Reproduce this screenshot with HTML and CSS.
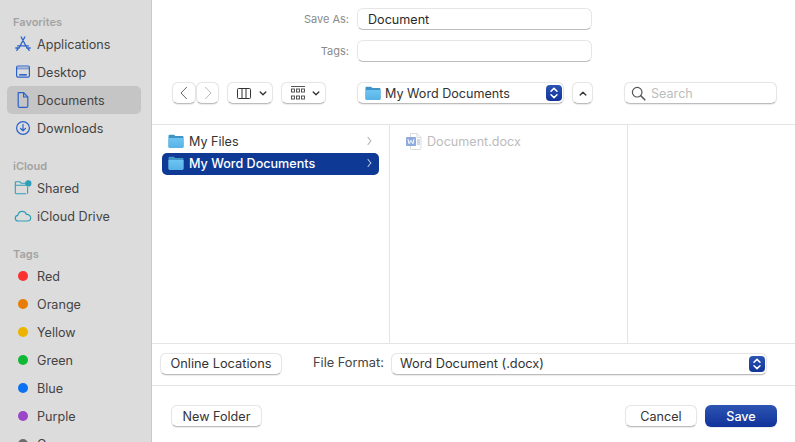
FILE: index.html
```html
<!DOCTYPE html>
<html lang="en">
<head>
    <meta charset="UTF-8">
    <title>Save As</title>
    <link rel="stylesheet" href="styles.css">
</head>
<body>
    <svg class="defs" width="0" height="0">
        <defs>
            <linearGradient id="folder-front" x1="0" y1="0" x2="0" y2="1">
                <stop offset="0" stop-color="#6cc4f0"/>
                <stop offset="1" stop-color="#58b2e6"/>
            </linearGradient>
            <symbol id="folder" viewBox="0 0 16 15">
                <path d="M.5 2.2C.5 1.3 1 .8 1.9.8h3.7c.6 0 .9.2 1.2.6l.6.7h6.7c.9 0 1.4.5 1.4 1.4v9.1c0 .9-.5 1.4-1.4 1.4H1.900c-.9 0-1.400-.5-1.400-1.400z" fill="#3f93c6"/>
                <path d="M.5 4.1h15v8.5c0 .9-.5 1.4-1.4 1.4H1.900c-.9 0-1.400-.5-1.400-1.400z" fill="url(#folder-front)"/>
            </symbol>
            <symbol id="stepper" viewBox="0 0 16 16">
                <path d="M5 6.300 8 3.400l3 2.900M5 9.700l3 2.900 3-2.900" fill="none" stroke="#fff" stroke-width="1.500" stroke-linecap="round" stroke-linejoin="round"/>
            </symbol>
        </defs>
    </svg>

    <aside class="sidebar">
        <h2 class="side-title">Favorites</h2>
        <div class="side-item">
            <svg class="side-icon" viewBox="0 0 18 18" fill="none" stroke="#2a62c9" stroke-width="1.300" stroke-linecap="round">
                <path d="M10.800 2 5 13M7.200 2 13 13M3.600 10.800h10.800M1.800 13h3.400M12.800 13h3.400"/>
                <path d="M2.800 15.400l1.200-1.600M15.200 15.400 14 13.800"/>
            </svg>
            Applications
        </div>
        <div class="side-item">
            <svg class="side-icon" viewBox="0 0 18 18" fill="none" stroke="#2a62c9" stroke-width="1.200">
                <rect x="2.600" y="3" width="12.800" height="11.200" rx="1.400"/>
                <path d="M2.600 5.400h12.800" stroke-width="2" opacity=".5"/>
                <path d="M5.200 11.800h7.600" stroke-width="1.600"/>
            </svg>
            Desktop
        </div>
        <div class="side-item side-item-active">
            <svg class="side-icon" viewBox="0 0 18 18" fill="none" stroke="#2a62c9" stroke-width="1.200" stroke-linejoin="round">
                <path d="M4.200 1.600h5.400l4.200 4.400v8.900c0 .9-.5 1.500-1.400 1.500H5.600c-.9 0-1.400-.6-1.400-1.500z"/>
                <path d="M9.600 1.600V6h4.200"/>
            </svg>
            Documents
        </div>
        <div class="side-item">
            <svg class="side-icon" viewBox="0 0 18 18" fill="none" stroke="#2a62c9" stroke-width="1.200" stroke-linecap="round" stroke-linejoin="round">
                <circle cx="9" cy="9" r="6.400"/>
                <path d="M9 5.400v6.400M6.600 9.500 9 11.900l2.400-2.400"/>
            </svg>
            Downloads
        </div>

        <h2 class="side-title side-title-gap">iCloud</h2>
        <div class="side-item">
            <svg class="side-icon" viewBox="0 0 18 18" fill="none" stroke="#2f9fb8" stroke-width="1.100" stroke-linejoin="round">
                <path d="M12.200 14.700H2.200c-.5 0-.9-.4-.9-.9V3.600c0-.5.4-.9.9-.9h3.500l1.400 1.500h4.600M1.300 6.200h10.400"/>
                <path d="M13.600 8v6.700"/>
                <circle cx="14.300" cy="4.400" r="2.600" fill="#2f9fb8"/>
            </svg>
            Shared
        </div>
        <div class="side-item">
            <svg class="side-icon" viewBox="0 0 18 18" fill="none" stroke="#2f9fb8" stroke-width="1.200" stroke-linejoin="round">
                <path d="M4.400 14c-1.800 0-3.100-1.200-3.100-2.800 0-1.500 1.100-2.600 2.500-2.800C4.300 6 6 4.400 8.200 4.400c2 0 3.500 1.200 4.100 2.900 2.300-.2 4.400 1.300 4.400 3.500 0 1.800-1.400 3.200-3.300 3.200z"/>
            </svg>
            iCloud Drive
        </div>

        <h2 class="side-title side-title-gap">Tags</h2>
        <div class="side-item"><span class="tag-dot tag-red"></span>Red</div>
        <div class="side-item"><span class="tag-dot tag-orange"></span>Orange</div>
        <div class="side-item"><span class="tag-dot tag-yellow"></span>Yellow</div>
        <div class="side-item"><span class="tag-dot tag-green"></span>Green</div>
        <div class="side-item"><span class="tag-dot tag-blue"></span>Blue</div>
        <div class="side-item"><span class="tag-dot tag-purple"></span>Purple</div>
        <div class="side-item"><span class="tag-dot tag-gray"></span>Gray</div>
    </aside>

    <main class="panel">
        <div class="form">
            <label class="form-label">Save As:</label>
            <div class="field field-value">Document</div>
            <label class="form-label">Tags:</label>
            <div class="field"></div>
        </div>

        <div class="toolbar">
            <div class="nav-group">
                <div class="ctrl nav-btn">
                    <svg width="8" height="14" viewBox="0 0 8 14"><path d="M6.800 1 1 7l5.800 6" fill="none" stroke="#666" stroke-width="1"/></svg>
                </div>
                <div class="ctrl nav-btn">
                    <svg width="8" height="14" viewBox="0 0 8 14"><path d="M1.200 1 7 7l-5.800 6" fill="none" stroke="#bbb" stroke-width="1"/></svg>
                </div>
            </div>
            <div class="ctrl view-btn view-columns">
                <svg width="14" height="11" viewBox="0 0 14 11" fill="none" stroke="#333" stroke-width="1"><rect x=".5" y=".5" width="13" height="10" rx="1"/><path d="M5 .5v10M9 .5v10"/></svg>
                <svg class="caret" viewBox="0 0 10 6"><path d="M1.500 1.200 5 4.600l3.500-3.400" fill="none" stroke="#333" stroke-width="1.700" stroke-linecap="round" stroke-linejoin="round"/></svg>
            </div>
            <div class="ctrl view-btn view-group">
                <svg width="14" height="14" viewBox="0 0 14 14" fill="none" stroke="#444" stroke-width=".9">
                    <path d="M0 .5h14"/>
                    <rect x=".5" y="3" width="3" height="3"/><rect x="5.500" y="3" width="3" height="3"/><rect x="10.500" y="3" width="3" height="3"/>
                    <rect x=".5" y="10" width="3" height="3"/><rect x="5.500" y="10" width="3" height="3"/><rect x="10.500" y="10" width="3" height="3"/>
                </svg>
                <svg class="caret" viewBox="0 0 10 6"><path d="M1.500 1.200 5 4.600l3.500-3.400" fill="none" stroke="#333" stroke-width="1.700" stroke-linecap="round" stroke-linejoin="round"/></svg>
            </div>
            <div class="ctrl path-select">
                <svg class="folder-icon" viewBox="0 0 16 15"><use href="#folder"/></svg>
                <span class="grow">My Word Documents</span>
                <svg class="stepper" viewBox="0 0 16 16"><use href="#stepper"/></svg>
            </div>
            <div class="ctrl up-btn">
                <svg class="caret" viewBox="0 0 10 6"><path d="M1.500 4.800 5 1.400l3.500 3.400" fill="none" stroke="#333" stroke-width="1.700" stroke-linecap="round" stroke-linejoin="round"/></svg>
            </div>
            <div class="ctrl search">
                <svg width="15" height="15" viewBox="0 0 15 15" fill="none" stroke="#555" stroke-width="1.200" stroke-linecap="round"><circle cx="6.200" cy="6.200" r="4.800"/><path d="M9.800 9.800 13.800 13.800" stroke-width="1.600"/></svg>
                <span>Search</span>
            </div>
        </div>

        <div class="browser">
            <div class="column">
                <div class="row">
                    <svg class="folder-icon" viewBox="0 0 16 15"><use href="#folder"/></svg>
                    <span class="grow">My Files</span>
                    <span class="chevron"></span>
                </div>
                <div class="row row-active">
                    <svg class="folder-icon" viewBox="0 0 16 15"><use href="#folder"/></svg>
                    <span class="grow">My Word Documents</span>
                    <span class="chevron"></span>
                </div>
            </div>
            <div class="column">
                <div class="row row-file">
                    <svg class="doc-icon" width="16" height="17" viewBox="0 0 16 17">
                        <path d="M4.500.5h6.500l4 4v11.300c0 .4-.3.7-.7.7H5.200c-.4 0-.7-.3-.7-.7z" fill="#fff" stroke="#dcdcdc"/>
                        <path d="M11 .5v4h4" fill="none" stroke="#dcdcdc"/>
                        <path d="M11 7h3M11 9h3M11 11h3" stroke="#9fb3dc"/>
                        <rect y="4" width="10" height="9" rx=".8" fill="#8faadc"/>
                        <path d="M2 6.200l1.100 4.600L5 7.400l1.900 3.400L8 6.200" fill="none" stroke="#fff"/>
                    </svg>
                    <span>Document.docx</span>
                </div>
            </div>
            <div class="column column-last"></div>
        </div>

        <div class="format-row">
            <div class="btn btn-online">Online Locations</div>
            <span class="format-label">File Format:</span>
            <div class="ctrl format-select">
                <span class="grow">Word Document (.docx)</span>
                <svg class="stepper" viewBox="0 0 16 16"><use href="#stepper"/></svg>
            </div>
        </div>

        <div class="footer">
            <div class="btn btn-folder">New Folder</div>
            <div class="btn btn-action btn-cancel">Cancel</div>
            <div class="btn btn-action btn-save">Save</div>
        </div>
    </main>
</body>
</html>
```

FILE: styles.css
```css
/* Save dialog */
html, body {
    height: 100%;
}

body {
    margin: 0;
    display: flex;
    overflow: hidden;
    background: #fff;
    color: #333;
    font-family: Inter, 'Liberation Sans', sans-serif;
    font-size: 12.6px;
}

.defs {
    position: absolute;
}

.grow {
    flex: 1;
}

/* Sidebar */
.sidebar {
    width: 151px;
    flex: none;
    padding-top: 15px;
    background: #dcdcdc;
    border-right: 1px solid #c9c9c9;
    overflow: hidden;
}

.side-title {
    margin: 0 0 0 13px;
    height: 14px;
    line-height: 14px;
    font-size: 11px;
    font-weight: 600;
    color: #a3a3a3;
}

.side-title-gap {
    margin-top: 17px;
    margin-bottom: 1px;
}

.side-item {
    display: flex;
    align-items: center;
    height: 28px;
    margin: 0 10px 0 7px;
    padding-left: 7px;
    border-radius: 5px;
    color: #444;
}

.side-title + .side-item {
    margin-top: 1px;
}

.side-title-gap + .side-item {
    margin-top: 0;
}

.side-item-active {
    background: #c5c5c5;
}

.side-icon {
    width: 18px;
    height: 18px;
    margin-right: 5px;
    flex: none;
}

.tag-dot {
    width: 10px;
    height: 10px;
    margin: 0 9px 0 4px;
    border-radius: 50%;
    flex: none;
}

.tag-red { background: #fb3131; }
.tag-orange { background: #e87c05; }
.tag-yellow { background: #ecb400; }
.tag-green { background: #10b935; }
.tag-blue { background: #0a71f5; }
.tag-purple { background: #9b45c9; }
.tag-gray { background: #6d6d70; }

/* Main panel */
.panel {
    flex: 1;
    min-width: 0;
    display: flex;
    flex-direction: column;
}

.form {
    display: grid;
    grid-template-columns: 197px 235px;
    grid-auto-rows: 22px;
    column-gap: 8px;
    row-gap: 10px;
    align-items: center;
    padding-top: 8px;
}

.form-label {
    text-align: right;
    font-size: 11px;
    color: #8a8a8a;
}

.field {
    box-sizing: border-box;
    height: 22px;
    padding-left: 10px;
    line-height: 21px;
    background: #fff;
    border: 1px solid #e6e6e6;
    border-bottom-color: #bdbdbd;
    border-radius: 6px;
}

.field-value {
    color: #2b2b2b;
}

.ctrl,
.btn {
    box-sizing: border-box;
    display: flex;
    align-items: center;
    height: 22px;
    background: #fff;
    border: 1px solid #e6e6e6;
    border-bottom-color: #bdbdbd;
    border-radius: 6px;
    box-shadow: 0 .5px 1px rgba(0, 0, 0, 0.08);
}

.toolbar {
    display: flex;
    align-items: center;
    height: 22px;
    margin-top: 20px;
    padding-left: 20px;
}

.nav-group {
    display: flex;
    width: 47px;
}

.nav-btn {
    width: 24px;
    justify-content: center;
}

.nav-btn + .nav-btn {
    width: 23px;
}

.view-btn {
    justify-content: space-between;
    padding: 0 5px 0 9px;
    margin-left: 8px;
}

.view-columns {
    width: 46px;
}

.view-group {
    width: 45px;
}

.caret {
    width: 8px;
    height: 5px;
    flex: none;
}

.path-select {
    width: 207px;
    margin-left: 31px;
    padding: 0 1px 0 7px;
    color: #333;
}

.folder-icon {
    width: 16px;
    height: 15px;
    margin-right: 4px;
    flex: none;
}

.stepper {
    width: 16px;
    height: 16px;
    flex: none;
    border-radius: 4px;
    background: linear-gradient(#2c54b4, #12349a);
}

.up-btn {
    width: 21px;
    margin-left: 8px;
    justify-content: center;
}

.search {
    width: 153px;
    margin-left: 31px;
    padding-left: 6px;
    color: #bdbdbd;
}

.search span {
    margin-left: 5px;
}

/* Column browser */
.browser {
    display: flex;
    height: 218px;
    margin-top: 20px;
    border-top: 1px solid #e4e4e4;
    border-bottom: 1px solid #e4e4e4;
}

.column {
    box-sizing: border-box;
    width: 238px;
    padding: 5px 10px 0;
    border-right: 1px solid #e4e4e4;
}

.column + .column {
    padding-left: 16px;
}

.column-last {
    flex: 1;
    border-right: 0;
}

.row {
    display: flex;
    align-items: center;
    height: 22px;
    padding: 0 8px 0 6px;
    border-radius: 5px;
    color: #333;
}

.row .folder-icon {
    margin-right: 5px;
}

.row-active {
    box-sizing: border-box;
    margin-top: 1px;
    padding-bottom: 2px;
    background: #0e3a96;
    color: #fff;
    font-weight: 500;
}

.chevron {
    width: 5px;
    height: 5px;
    border-top: 1px solid #aaa;
    border-right: 1px solid #aaa;
    transform: scaleX(.8) rotate(45deg);
}

.row-active .chevron {
    border-color: #c5d2ea;
}

.row-file {
    padding-left: 0;
    color: #bcbcbc;
}

.doc-icon {
    margin-right: 5px;
    flex: none;
}

/* Bottom rows */
.format-row {
    display: flex;
    align-items: flex-start;
    height: 32px;
    padding: 9px 0 0 8px;
    border-bottom: 1px solid #e4e4e4;
    font-size: 12.8px;
}

.format-row .btn,
.format-row .ctrl {
    padding-bottom: 1px;
}

.btn {
    justify-content: center;
    color: #333;
}

.btn-online {
    width: 122px;
}

.format-label {
    width: 71px;
    margin-left: 31px;
    line-height: 20px;
    color: #444;
}

.format-select {
    width: 376px;
    margin-left: 7px;
    padding: 0 1px 0 8px;
}

.format-select .stepper {
    margin-top: 1px;
}

.footer {
    display: flex;
    align-items: center;
    padding: 19px 18px 0 19px;
}

.btn-folder {
    width: 91px;
    margin-right: auto;
}

.btn-action {
    width: 72px;
}

.btn-save {
    margin-left: 8px;
    border: 0;
    background: linear-gradient(#2d55b2, #10329a);
    color: #fff;
    font-weight: 500;
}
```
